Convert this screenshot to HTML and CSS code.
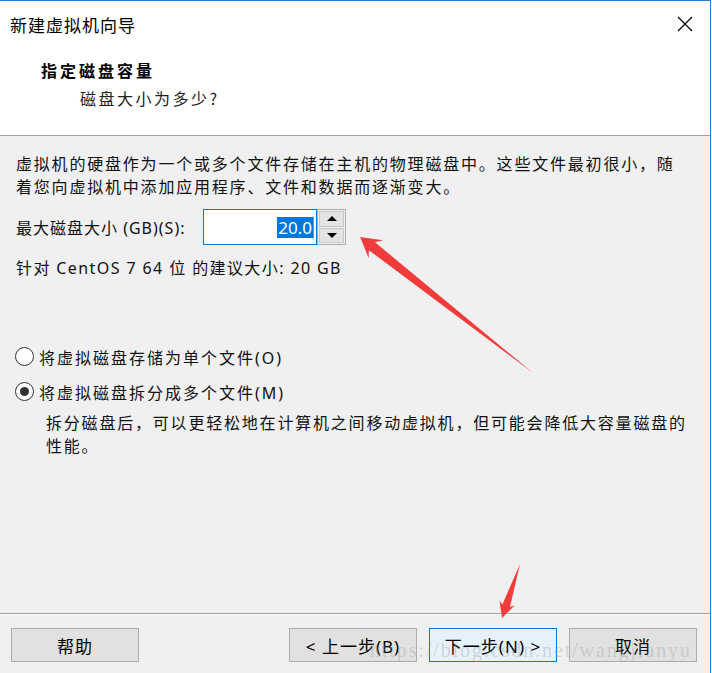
FILE: index.html
```html
<!DOCTYPE html>
<html lang="zh-CN">
<head>
<meta charset="utf-8">
<title>新建虚拟机向导</title>
<link rel="stylesheet" href="styles.css">
</head>
<body>
<div class="window">
  <div class="header">
    <div class="titlebar">
      <span class="title">新建虚拟机向导</span>
      <svg class="close" width="16" height="16" viewBox="0 0 16 16"><path d="M1 1L15 15M15 1L1 15" stroke="#000" stroke-width="1.2" fill="none"/></svg>
    </div>
    <div class="heading">指定磁盘容量</div>
    <div class="subheading">磁盘大小为多少?</div>
  </div>
  <div class="content">
    <p class="intro">虚拟机的硬盘作为一个或多个文件存储在主机的物理磁盘中。这些文件最初很小，随<br>着您向虚拟机中添加应用程序、文件和数据而逐渐变大。</p>
    <div class="size-row">
      <span class="label">最大磁盘大小 (GB)(S):</span>
      <div class="spin">
        <div class="spin-input"><span class="sel">20.0</span><span class="caret"></span></div>
        <div class="spin-buttons">
          <span class="spin-btn"><span class="tri-up"></span></span>
          <span class="spin-btn"><span class="tri-down"></span></span>
        </div>
      </div>
    </div>
    <p class="recommend">针对 CentOS 7 64 位 的建议大小: 20 GB</p>
    <div class="options">
      <div class="radio"><span class="circle"></span><span>将虚拟磁盘存储为单个文件(O)</span></div>
      <div class="radio checked"><span class="circle"></span><span>将虚拟磁盘拆分成多个文件(M)</span></div>
      <p class="desc">拆分磁盘后，可以更轻松地在计算机之间移动虚拟机，但可能会降低大容量磁盘的<br>性能。</p>
    </div>
  </div>
  <div class="footer">
    <button class="btn">帮助</button>
    <div class="nav">
      <button class="btn">&lt; 上一步(B)</button>
      <button class="btn default">下一步(N) &gt;</button>
      <button class="btn">取消</button>
    </div>
  </div>
  <svg class="annot" width="712" height="673" viewBox="0 0 712 673">
    <polygon transform="translate(533 373) rotate(218.2)" points="0,0 205,-5 200,-11.5 220,0 200,11.5 205,5" fill="#f23c3c"/>
    <polygon transform="translate(520 564) rotate(108.4)" points="0,0 44,-4 41,-8 57,0 41,8 44,4" fill="#f23c3c"/>
  </svg>
  <div class="watermark">https://blog.csdn.net/wangjianyu</div>
</div>
</body>
</html>
```
FILE: styles.css
```css
html, body {
  margin: 0;
  padding: 0;
  background: #ffffff;
}
body {
  font-family: "Noto Sans", "Noto Sans CJK SC", sans-serif;
  color: #000;
}
.window {
  position: relative;
  width: 710px;
  height: 672px;
  border-top: 1px solid #1a80d6;
  border-right: 1px solid #1a80d6;
  display: flex;
  flex-direction: column;
  background: #f0f0f0;
  overflow: hidden;
}
.header {
  background: #fff;
  height: 135px;
  box-sizing: border-box;
  border-bottom: 1px solid #a0a0a0;
  flex: none;
}
.titlebar {
  height: 46px;
  display: flex;
  align-items: center;
  justify-content: space-between;
  padding: 0 17px 0 10px;
}
.title {
  font-family: "Noto Sans CJK SC", sans-serif;
  font-size: 17px;
  letter-spacing: 1px;
}
.close {
  display: block;
}
.heading {
  font-family: "Noto Sans CJK SC", serif;
  font-weight: bold;
  font-size: 16px;
  letter-spacing: 3px;
  line-height: 24px;
  padding-left: 41px;
  margin-top: 11px;
}
.subheading {
  font-family: "Noto Sans CJK SC", sans-serif;
  font-size: 16px;
  letter-spacing: 2.5px;
  line-height: 24px;
  padding-left: 80px;
  margin-top: 4px;
  color: #222;
}
.content {
  flex: 1;
  padding: 16px 0 0 16px;
  font-size: 16px;
  letter-spacing: 1.8px;
  color: #111;
}
.intro {
  margin: 0;
  line-height: 23px;
  font-family: "Noto Sans CJK SC", sans-serif;
}
.size-row {
  display: flex;
  align-items: center;
  margin-top: 11px;
  height: 36px;
}
.label {
  font-size: 16px;
  letter-spacing: 1px;
  width: 187px;
}
.spin {
  display: flex;
  height: 36px;
}
.spin-input {
  width: 110px;
  height: 34px;
  border: 1px solid #0078d7;
  background: #fff;
  display: flex;
  align-items: center;
  justify-content: flex-end;
  padding-right: 2px;
}
.sel {
  background: #0078d7;
  color: #fff;
  font-size: 17px;
  letter-spacing: 0;
  line-height: 21px;
  padding: 0 1px;
}
.caret {
  width: 1px;
  height: 21px;
  background: #e8731c;
}
.spin-buttons {
  width: 25px;
  border: 1px solid #adadad;
  display: flex;
  flex-direction: column;
  gap: 1px;
  background: #f0f0f0;
  padding: 1px;
}
.spin-btn {
  flex: 1;
  background: #e4e4e4;
  border: 1px solid #c8c8c8;
  display: flex;
  align-items: center;
  justify-content: center;
}
.tri-up {
  width: 0;
  height: 0;
  border-left: 5px solid transparent;
  border-right: 5px solid transparent;
  border-bottom: 5px solid #000;
}
.tri-down {
  width: 0;
  height: 0;
  border-left: 5px solid transparent;
  border-right: 5px solid transparent;
  border-top: 5px solid #000;
}
.recommend {
  margin: 12px 0 0;
  line-height: 23px;
  font-size: 16px;
  letter-spacing: 1.4px;
}
.options {
  margin-top: 59px;
}
.radio {
  display: flex;
  align-items: center;
  height: 35px;
  gap: 5px;
  margin-left: -1px;
  letter-spacing: 2px;
}
.circle {
  width: 19px;
  height: 19px;
  box-sizing: border-box;
  border: 1px solid #333;
  border-radius: 50%;
  background: #fff;
  display: flex;
  align-items: center;
  justify-content: center;
}
.checked .circle::after {
  content: "";
  width: 9px;
  height: 9px;
  border-radius: 50%;
  background: #333;
}
.desc {
  margin: 2px 0 0 30px;
  line-height: 23px;
  font-family: "Noto Sans CJK SC", sans-serif;
}
.footer {
  flex: none;
  height: 60px;
  box-sizing: border-box;
  border-top: 1px solid #a0a0a0;
  box-shadow: inset 0 1px 0 #fff;
  display: flex;
  justify-content: space-between;
  align-items: flex-start;
  padding: 14px 13px 0 11px;
}
.nav {
  display: flex;
  gap: 12px;
}
.btn {
  width: 128px;
  height: 34px;
  background: #e1e1e1;
  border: 1px solid #adadad;
  font-family: "Noto Sans", "Noto Sans CJK SC", sans-serif;
  font-size: 17px;
  letter-spacing: 1px;
  color: #000;
  padding: 0;
}
.btn.default {
  background: #e5f1fb;
  border-color: #0078d7;
}
.annot {
  position: absolute;
  left: 0;
  top: -1px;
  pointer-events: none;
}
.watermark {
  position: absolute;
  left: 370px;
  top: 638px;
  font-family: "Liberation Serif", serif;
  font-size: 20px;
  letter-spacing: 1.9px;
  color: rgba(140, 140, 140, 0.3);
  pointer-events: none;
}
```
